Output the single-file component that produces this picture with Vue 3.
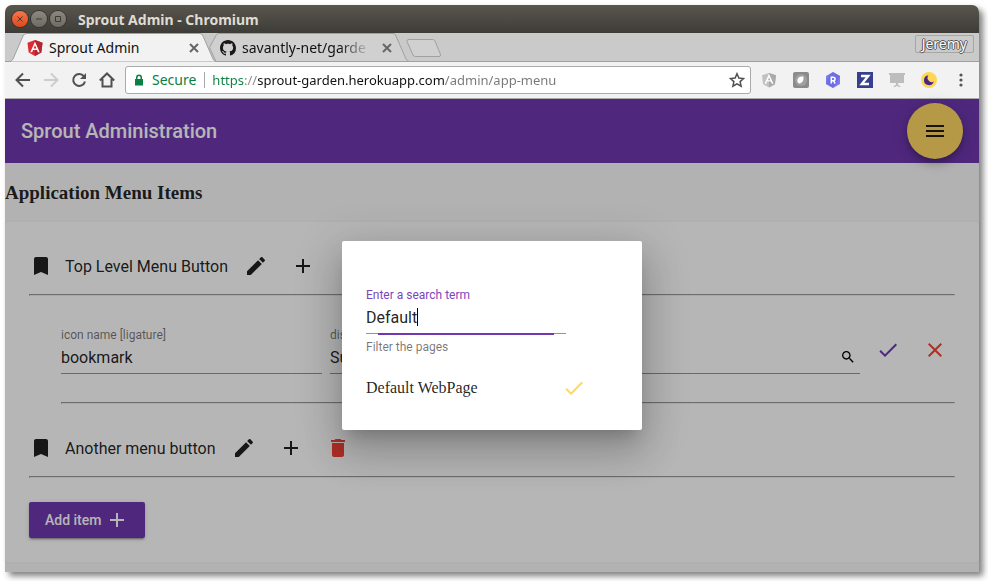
<script setup>
import { ref } from 'vue'

const address = ref('https://sprout-garden.herokuapp.com/admin/app-menu')
const iconName = ref('bookmark')
const displayText = ref('Sub Menu Item')
const link = ref('')
const term = ref('Default')

const icons = {
  bookmark: 'M17 3H7c-1.1 0-1.99.9-1.99 2L5 21l7-3 7 3V5c0-1.100-.9-2-2-2z',
  edit: 'M3 17.250V21h3.750L17.810 9.940l-3.750-3.750L3 17.250zM20.710 7.040c.390-.390.390-1.020 0-1.410l-2.340-2.340c-.390-.390-1.020-.390-1.410 0l-1.830 1.830 3.750 3.750 1.830-1.830z',
  add: 'M19 13h-6v6h-2v-6H5v-2h6V5h2v6h6v2z',
  trash: 'M6 19c0 1.100.9 2 2 2h8c1.100 0 2-.9 2-2V7H6v12zM19 4h-3.500l-1-1h-5l-1 1H5v2h14V4z',
  check: 'M9 16.170L4.830 12l-1.420 1.410L9 19 21 7l-1.410-1.410z',
  close: 'M19 6.410L17.590 5 12 10.590 6.410 5 5 6.410 10.590 12 5 17.590 6.410 19 12 13.410 17.590 19 19 17.590 13.410 12z',
  search: 'M15.500 14h-.790l-.280-.270C15.410 12.590 16 11.110 16 9.500 16 5.910 13.090 3 9.500 3S3 5.910 3 9.500 5.910 16 9.500 16c1.610 0 3.090-.590 4.230-1.570l.270.280v.790l5 4.990L20.490 19l-4.990-5zm-6 0C7.010 14 5 11.990 5 9.500S7.010 5 9.500 5 14 7.010 14 9.500 11.990 14 9.500 14z',
  menu: 'M3 18h18v-2H3v2zm0-5h18v-2H3v2zm0-7v2h18V6H3z',
}
</script>

<template>
  <div class="window">
    <header class="titlebar">
      <button class="wm wm-close" aria-label="Close window">
        <svg viewBox="0 0 16 16"><path d="M5.500 5.500l5 5m0-5l-5 5" /></svg>
      </button>
      <button class="wm" aria-label="Minimize window">
        <svg viewBox="0 0 16 16"><path d="M5 8h6" /></svg>
      </button>
      <button class="wm" aria-label="Maximize window">
        <svg viewBox="0 0 16 16"><path d="M5.500 5.500h5v5h-5z" /></svg>
      </button>
      <span class="wm-title">Sprout Admin - Chromium</span>
    </header>

    <nav class="tabs">
      <div class="tab active">
        <svg class="tab-shape" viewBox="0 0 206 29" preserveAspectRatio="none">
          <path d="M0 29L0 28.500Q2 28 3 26L13 3Q14 .5 17 .5H190Q192 .5 193 3L203 26Q204 28 206 28.500V29z" />
        </svg>
        <svg class="favicon" viewBox="0 0 16 16">
          <path fill="#dd2b36" d="M8 0l7.500 2.700-1.200 9.800L8 16l-6.300-3.500L.5 2.700z" />
          <path fill="#b52631" d="M8 0l7.500 2.700-1.200 9.800L8 16z" />
          <path fill="#fff" fill-rule="evenodd" d="M8 1.800L3.300 12.200h1.800l.9-2.300h4l.9 2.300h1.800zM8 5.200l1.400 3.200H6.600z" />
        </svg>
        <a class="tab-name" href="#">Sprout Admin</a>
        <button class="tab-close" aria-label="Close tab"><svg viewBox="0 0 10 10"><path d="M1 1l8 8M9 1L1 9" /></svg></button>
      </div>
      <div class="tab">
        <svg class="tab-shape" viewBox="0 0 206 29" preserveAspectRatio="none">
          <path d="M13 28.500L6.500 14.500L13 2.500Q14 .5 16 .5H190Q192 .5 193 3L203 26Q204 28 206 28.500z" />
        </svg>
        <svg class="favicon" viewBox="0 0 16 16">
          <path fill="#1b1817" d="M8 0C3.580 0 0 3.580 0 8c0 3.540 2.290 6.530 5.470 7.590.4.070.550-.170.550-.380 0-.190-.010-.820-.010-1.490-2.010.370-2.530-.490-2.690-.940-.090-.230-.480-.940-.820-1.130-.280-.150-.680-.520-.010-.530.630-.010 1.080.580 1.230.820.720 1.210 1.870.870 2.330.660.070-.520.280-.870.510-1.070-1.780-.2-3.640-.890-3.640-3.950 0-.870.310-1.590.820-2.150-.080-.2-.360-1.020.080-2.120 0 0 .670-.210 2.200.820.640-.180 1.320-.270 2-.270s1.360.090 2 .270c1.530-1.040 2.200-.820 2.200-.820.440 1.100.160 1.920.080 2.120.510.560.820 1.270.820 2.150 0 3.070-1.870 3.750-3.650 3.950.290.250.540.730.540 1.480 0 1.070-.010 1.930-.010 2.200 0 .210.150.460.550.380A8.010 8.010 0 0016 8c0-4.420-3.580-8-8-8z" />
        </svg>
        <a class="tab-name faded" href="#">savantly-net/garde</a>
        <button class="tab-close" aria-label="Close tab"><svg viewBox="0 0 10 10"><path d="M1 1l8 8M9 1L1 9" /></svg></button>
      </div>
      <button class="new-tab" aria-label="New tab">
        <svg viewBox="0 0 36 18"><path d="M3 .5H26.500Q28.500 .5 29 2L34.500 15.500Q35 17.500 33 17.500H9.500Q7.500 17.500 7 16L1 2.500Q.5 .5 3 .5z" /></svg>
      </button>
      <button class="profile">Jeremy</button>
    </nav>

    <div class="toolbar">
      <button class="nav" aria-label="Back"><svg viewBox="0 0 16 16"><path d="M15 8H2M8 1.500L1.500 8 8 14.500" /></svg></button>
      <button class="nav off" aria-label="Forward"><svg viewBox="0 0 16 16"><path d="M1 8h13M8 1.500L14.500 8 8 14.500" /></svg></button>
      <button class="nav" aria-label="Reload">
        <svg viewBox="0 0 16 16"><path d="M13 4.300A6 6 0 1 0 14 9.500" /><path class="solid" d="M15 1v6H9z" /></svg>
      </button>
      <button class="nav" aria-label="Home"><svg viewBox="0 0 16 16"><path d="M.8 8.500L8 1.500l7.200 7M3.500 7v7.500h9V7" /></svg></button>
      <div class="omnibox">
        <svg class="lock" viewBox="0 0 10 12"><path fill="#0b8043" fill-rule="evenodd" d="M2 5V3.500a3 3 0 016 0V5h1v6.500H1V5zm1.500 0h3V3.500a1.500 1.500 0 00-3 0z" /></svg>
        <span class="secure">Secure</span>
        <input v-model="address" class="url" type="text" aria-label="Address" spellcheck="false" />
        <button class="star" aria-label="Bookmark this page">
          <svg viewBox="0 0 16 16"><path d="M8 1.700l1.900 4.300 4.700.5-3.500 3.100 1 4.600L8 11.800l-4.100 2.400 1-4.600L1.400 6.500l4.700-.5z" /></svg>
        </button>
      </div>
      <div class="extensions">
        <svg viewBox="0 0 16 16">
          <path fill="#c1c1c1" d="M8 1l7 2.300-1.100 9L8 15.500l-5.900-3.200L1 3.300z" />
          <path fill="#aaa" d="M8 1l7 2.300-1.100 9L8 15.500z" />
          <path fill="#fff" fill-rule="evenodd" d="M8 1.800L3.500 11.800h1.700l.9-2.200h3.800l.9 2.200h1.700zM8 5.200l1.300 3H6.700z" />
        </svg>
        <svg viewBox="0 0 16 16">
          <rect width="16" height="16" rx="2" fill="#8b8b8b" /><circle cx="8" cy="8" r="6" fill="#a0a0a0" />
          <path fill="#fff" d="M10 4c1.500 3-.3 7-3.600 7.500C3.500 11 4 7 6 5.300 7.500 4.300 9 5 10 4z" />
        </svg>
        <svg viewBox="0 0 16 16">
          <path fill="#7c7cf0" d="M8 0l7 4v8l-7 4-7-4V4z" /><path fill="#6666dc" d="M8 0l7 4-3 7-4 5-7-4 3-8z" opacity=".6" />
          <path fill="none" stroke="#fff" stroke-width="1.500" d="M6.300 11.500V5.200h2a1.700 1.700 0 010 3.500h-2m2 0l1.900 2.800" />
        </svg>
        <svg viewBox="0 0 16 16"><rect width="16" height="16" fill="#36408f" /><path fill="none" stroke="#fff" stroke-width="2.400" d="M4 4h7.200L4.800 12H12" /></svg>
        <svg viewBox="0 0 16 16"><path fill="#bdbdbd" d="M0 1h16v2h-1v8H9v1.500l3 2.500h-2l-2-1.300L6 15H4l3-2.500V11H1V3H0z" /></svg>
        <svg viewBox="0 0 16 16"><circle cx="8" cy="8" r="8" fill="#fdd751" /><path fill="#4a2683" d="M7.500 3.200A5 5 0 1012.800 9.500 4.200 4.200 0 017.500 3.200z" /></svg>
        <svg viewBox="0 0 16 16"><g fill="#555"><circle cx="8" cy="3" r="1.600" /><circle cx="8" cy="8" r="1.600" /><circle cx="8" cy="13" r="1.600" /></g></svg>
      </div>
    </div>

    <div class="viewport">
      <header class="appbar">
        <span>Sprout Administration</span>
        <button class="fab" aria-label="Open menu"><svg class="icon" viewBox="0 0 24 24"><path :d="icons.menu" /></svg></button>
      </header>

      <h3>Application Menu Items</h3>

      <main class="card">
        <div class="item">
          <svg class="icon lead" viewBox="0 0 24 24"><path :d="icons.bookmark" /></svg>
          <span class="item-name">Top Level Menu Button</span>
          <button class="icon-btn" aria-label="Edit"><svg class="icon" viewBox="0 0 24 24"><path :d="icons.edit" /></svg></button>
          <button class="icon-btn" aria-label="Add"><svg class="icon" viewBox="0 0 24 24"><path :d="icons.add" /></svg></button>
        </div>
        <hr />
        <form class="sub" @submit.prevent>
          <div class="sub-row">
            <div class="field">
              <label for="icon-name">icon name [ligature]</label>
              <div class="line"><input id="icon-name" v-model="iconName" type="text" /></div>
            </div>
            <div class="field">
              <label for="display-text">display text</label>
              <div class="line"><input id="display-text" v-model="displayText" type="text" /></div>
            </div>
            <div class="field">
              <label for="link">&nbsp;</label>
              <div class="line">
                <input id="link" v-model="link" type="text" aria-label="Link" />
                <button class="find" aria-label="Search pages"><svg viewBox="0 0 24 24"><path :d="icons.search" /></svg></button>
              </div>
            </div>
            <div class="actions">
              <button class="icon-btn primary" aria-label="Save"><svg class="icon" viewBox="0 0 24 24"><path :d="icons.check" /></svg></button>
              <button class="icon-btn warn" aria-label="Cancel"><svg class="icon" viewBox="0 0 24 24"><path :d="icons.close" /></svg></button>
            </div>
          </div>
          <hr />
        </form>
        <div class="item">
          <svg class="icon lead" viewBox="0 0 24 24"><path :d="icons.bookmark" /></svg>
          <span class="item-name">Another menu button</span>
          <button class="icon-btn" aria-label="Edit"><svg class="icon" viewBox="0 0 24 24"><path :d="icons.edit" /></svg></button>
          <button class="icon-btn" aria-label="Add"><svg class="icon" viewBox="0 0 24 24"><path :d="icons.add" /></svg></button>
          <button class="icon-btn warn" aria-label="Delete"><svg class="icon" viewBox="0 0 24 24"><path :d="icons.trash" /></svg></button>
        </div>
        <hr />
        <button class="add-item">Add item<svg class="icon" viewBox="0 0 24 24"><path :d="icons.add" /></svg></button>
      </main>

      <div class="backdrop">
        <section class="dialog" role="dialog" aria-label="Page search">
          <div class="field focused">
            <label for="term">Enter a search term</label>
            <div class="line"><input id="term" v-model="term" type="text" /><i class="caret"></i></div>
            <p class="hint">Filter the pages</p>
          </div>
          <div class="result">
            <span>Default WebPage</span>
            <button class="icon-btn accent" aria-label="Select page"><svg class="icon" viewBox="0 0 24 24"><path :d="icons.check" /></svg></button>
          </div>
        </section>
      </div>
    </div>
  </div>
</template>

<style>
body {
  background: #fff;
}
</style>

<style scoped>
* {
  box-sizing: border-box;
}
button {
  border: 0;
  padding: 0;
  background: none;
  color: inherit;
  font: inherit;
}
input {
  border: 0;
  padding: 0;
  outline: 0;
  background: none;
  color: inherit;
  font: inherit;
  min-width: 0;
}
svg {
  display: block;
  flex: none;
}
.window {
  margin: 5px 9px 9px 5px;
  border-radius: 7px 7px 0 0;
  box-shadow: 4px 4px 6px rgba(0, 0, 0, 0.5);
  font-family: "Noto Sans", sans-serif;
}

/* Window frame */
.titlebar {
  display: flex;
  align-items: center;
  gap: 3px;
  height: 28px;
  padding-left: 7px;
  border-radius: 7px 7px 0 0;
  background: linear-gradient(#59564e, #3d3c37);
}
.wm {
  width: 16px;
  height: 16px;
  border-radius: 50%;
  background: linear-gradient(#8b897f, #6d6b63);
  box-shadow: 0 0 0 1px #35342f;
}
.wm-close {
  background: linear-gradient(#f4764d, #dd4a1b);
}
.wm path {
  fill: none;
  stroke: #3b3a35;
}
.wm-title {
  margin-left: 9px;
  color: #dfdbd2;
  font-size: 14px;
  font-weight: 700;
}
.tabs {
  display: flex;
  height: 29px;
  padding-left: 5px;
  background: #cacaca;
  box-shadow: inset 0 -1px #a0a0a0;
}
.tab {
  position: relative;
  display: flex;
  align-items: center;
  width: 206px;
  padding: 0 17px;
}
.tab + .tab {
  margin-left: -13px;
}
.tab-shape {
  position: absolute;
  inset: 0;
  width: 100%;
  height: 100%;
}
.tab-shape path {
  fill: #d0d0d0;
  stroke: #a0a0a0;
}
.tab.active {
  z-index: 1;
}
.active .tab-shape path {
  fill: #f2f2f2;
}
.favicon {
  position: relative;
  width: 16px;
  height: 16px;
  margin-right: 6px;
}
.tab-name {
  position: relative;
  flex: 1;
  color: #111;
  font-size: 14px;
  text-decoration: none;
  white-space: nowrap;
}
.faded {
  mask-image: linear-gradient(to right, #000 75%, transparent);
}
.tab-close {
  position: relative;
  margin-left: 11px;
}
.tab-close svg {
  width: 10px;
  height: 10px;
}
.tab-close path {
  fill: none;
  stroke: #666;
  stroke-width: 2;
}
.new-tab svg {
  width: 36px;
  height: 18px;
}
.new-tab {
  margin-left: -3px;
}
.new-tab path {
  fill: #d0d0d0;
  stroke: #a0a0a0;
}
.profile {
  align-self: flex-start;
  height: 18px;
  margin: 2px 5px 0 auto;
  padding: 0 6px;
  border: 1px solid #a6a6a6;
  border-radius: 2px;
  color: #fff;
  font-size: 14px;
  line-height: 16px;
  text-shadow: 1px 0 #555, -1px 0 #555, 0 1px #555, 0 -1px #555;
}
.toolbar {
  display: flex;
  align-items: center;
  gap: 12px;
  height: 37px;
  padding: 0 10px;
  border-bottom: 1px solid #aaa;
  background: #f2f2f2;
}
.nav svg,
.star svg {
  width: 16px;
  height: 16px;
}
.nav path,
.star path {
  fill: none;
  stroke: #505050;
  stroke-width: 2;
}
.star path {
  stroke-width: 1.500;
}
.nav .solid {
  fill: #505050;
  stroke: none;
}
.nav.off path {
  stroke: #ccc;
}
.omnibox {
  display: flex;
  flex: 1;
  align-items: center;
  height: 28px;
  margin-left: -2px;
  padding: 0 5px 0 8px;
  border: 1px solid #aaa;
  border-radius: 3px;
  background: #fff;
  font-size: 13px;
}
.lock {
  width: 10px;
  height: 12px;
}
.secure {
  margin-left: 8px;
  padding-right: 8px;
  border-right: 1px solid #aaa;
  color: #0b8043;
  font-size: 14px;
  line-height: 16px;
}
.url {
  flex: 1;
  margin-left: 7px;
  background: linear-gradient(to right, #0b8043 32px, #888 32px 45px, #111 45px 233px, #777 233px);
  background-clip: text;
  color: transparent;
}
.extensions {
  display: flex;
  gap: 16px;
  margin-left: -2px;
}
.extensions svg {
  width: 16px;
  height: 16px;
}

/* Page */
.viewport {
  position: relative;
  padding-bottom: 10px;
  background: #fafafa;
  color: rgba(0, 0, 0, 0.87);
  font-family: Roboto, sans-serif;
  font-size: 16px;
}
.appbar {
  display: flex;
  align-items: center;
  justify-content: space-between;
  height: 64px;
  padding: 0 16px;
  background: #6f38b0;
  color: #fff;
  font-size: 20px;
  font-weight: 500;
}
.fab {
  display: grid;
  place-items: center;
  width: 56px;
  height: 56px;
  border-radius: 50%;
  background: #ffd764;
  box-shadow: 0 3px 5px -1px rgba(0, 0, 0, 0.2), 0 6px 10px rgba(0, 0, 0, 0.14), 0 1px 18px rgba(0, 0, 0, 0.12);
  color: rgba(0, 0, 0, 0.87);
}
.icon {
  width: 24px;
  height: 24px;
  fill: currentColor;
}
h3 {
  margin: 0;
  padding: 19px 0;
  font: 700 19px/21px "Liberation Serif", serif;
}
.card {
  padding: 24px;
  border-radius: 2px;
  background: #fff;
  box-shadow: 0 0 2px rgba(0, 0, 0, 0.08);
}
.item {
  display: flex;
  align-items: center;
  gap: 7px;
  height: 40px;
}
.item-name {
  margin-left: 5px;
  padding-right: 1px;
}
.icon-btn {
  display: grid;
  flex: none;
  place-items: center;
  width: 40px;
  height: 40px;
}
.primary {
  color: #6f38b0;
}
.warn {
  color: #f44336;
}
.accent {
  color: #ffd764;
}
hr {
  margin: 8px 0;
  border: 1px solid;
  border-color: #999 #eee #eee #999;
}
.sub {
  padding: 8px 0 16px 32px;
}
.sub-row {
  display: flex;
  gap: 8px;
  padding-bottom: 20px;
}
.sub hr {
  margin-bottom: 0;
}
.sub {
  padding-bottom: 24px;
}
.field {
  display: flex;
  flex: 1;
  flex-direction: column;
  min-width: 0;
  padding-top: 16px;
}
.field label,
.hint {
  margin: 0;
  color: rgba(0, 0, 0, 0.54);
  font-size: 12px;
  line-height: 14px;
}
.line {
  display: flex;
  align-items: center;
  height: 32px;
  padding-bottom: 1px;
  border-bottom: 1px solid #949494;
}
.line input {
  flex: 1;
}
.find {
  margin-right: 4px;
}
.find svg {
  width: 16px;
  height: 16px;
}
.actions {
  display: flex;
  gap: 7px;
  padding-top: 18px;
}
.add-item {
  display: flex;
  align-items: center;
  gap: 4px;
  height: 36px;
  margin-top: 24px;
  padding: 0 16px;
  border-radius: 2px;
  background: #6f38b0;
  box-shadow: 0 3px 1px -2px rgba(0, 0, 0, 0.2), 0 2px 2px rgba(0, 0, 0, 0.14), 0 1px 5px rgba(0, 0, 0, 0.12);
  color: #fff;
  font-size: 14px;
  font-weight: 500;
}
.backdrop {
  position: absolute;
  inset: 0;
  display: grid;
  place-items: center;
  background: rgba(0, 0, 0, 0.288);
}
.dialog {
  width: 300px;
  padding: 24px 24px 22px;
  border-radius: 2px;
  background: #fff;
  box-shadow: 0 11px 15px -7px rgba(0, 0, 0, 0.2), 0 24px 38px 3px rgba(0, 0, 0, 0.14), 0 9px 46px 8px rgba(0, 0, 0, 0.12);
}
.focused {
  width: 200px;
  padding-top: 23px;
}
.focused label {
  color: #7c46bd;
}
.focused .line {
  position: relative;
}
.focused .line::after {
  content: "";
  position: absolute;
  right: 12px;
  bottom: -2px;
  left: 12px;
  height: 2px;
  background: #6f38b0;
}
.focused input {
  flex: none;
  field-sizing: content;
  caret-color: transparent;
}
.caret {
  width: 1px;
  height: 18px;
  background: #000;
}
.hint {
  margin-top: 6px;
}
.result {
  display: flex;
  align-items: center;
  justify-content: space-between;
  width: 228px;
  margin-top: 14px;
  font-family: "Liberation Serif", serif;
}
</style>
